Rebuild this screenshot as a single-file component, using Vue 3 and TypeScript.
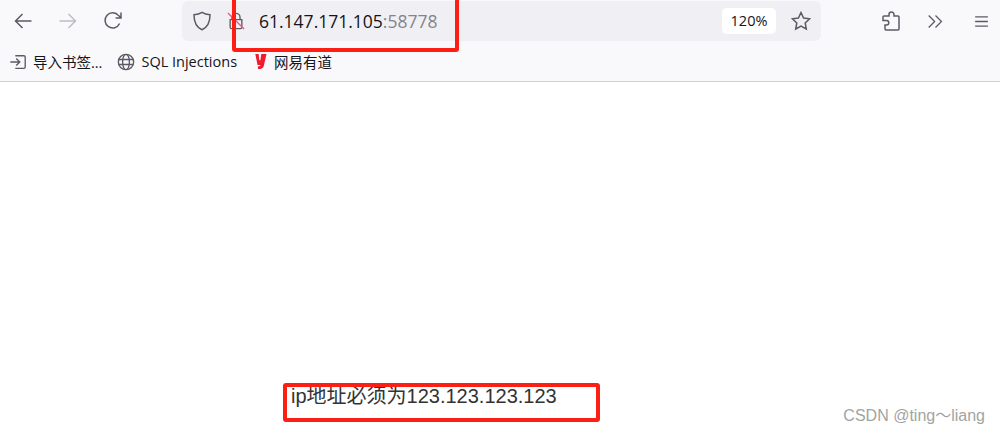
<script setup lang="ts">
const host = '61.147.171.105'
const port = ':58778'
const target = '123.123.123.123'
</script>

<template>
  <div class="browser">
    <header class="toolbar">
      <div class="nav">
        <svg class="icon back" viewBox="0 0 20 20"><path d="M18.5 10H2.5M9.5 3l-7 7 7 7" /></svg>
        <svg class="icon forward" viewBox="0 0 20 20"><path d="M1.5 10h16M10.5 3l7 7-7 7" /></svg>
        <svg class="icon reload" viewBox="0 0 20 20"><path d="M16.6 12.5A7.6 7.6 0 1 1 15.6 4.6L17.6 6.5M18 1.5v5.4h-5.4" /></svg>
      </div>
      <div class="urlbar">
        <svg class="icon shield" viewBox="0 0 20 20"><path d="M10 1.3c2.4 1.6 4.6 2.2 8 2.4 0 7-1.6 12.2-8 15-6.4-2.8-8-8-8-15 3.4-.2 5.6-.8 8-2.4z" /></svg>
        <svg class="icon lock" viewBox="0 0 20 20">
          <path d="M5.5 8.5V6a4.5 4.5 0 0 1 9 0v2.5M3.5 8.5h13v8.5a1.5 1.5 0 0 1-1.5 1.500H5A1.500 1.500 0 0 1 3.500 17z" />
          <path class="slash" d="M1 1l18 18" />
        </svg>
        <div class="address"><span class="host">{{ host }}</span><span class="port">{{ port }}</span></div>
        <div class="zoom">120%</div>
        <svg class="icon star" viewBox="0 0 20 20"><path d="M10 1.500l2.600 5.500 6 .8-4.400 4.200 1.100 6L10 15.100 4.700 18l1.100-6L1.400 7.800l6-.8z" /></svg>
      </div>
      <div class="actions">
        <svg class="icon puzzle" viewBox="0 0 20 20"><path d="M8 3.500a2.500 2.500 0 0 1 5 0V5h4a1 1 0 0 1 1 1v12a1 1 0 0 1-1 1H5a1 1 0 0 1-1-1v-4h1.500a2.300 2.300 0 0 0 0-4.600H2V6a1 1 0 0 1 1-1h5z" /></svg>
        <svg class="icon chevrons" viewBox="0 0 20 20"><path d="M2 3l7 7-7 7M10 3l7 7-7 7" /></svg>
        <svg class="icon menu" viewBox="0 0 20 20"><path d="M2.500 4.500h15M2.500 10h15M2.500 15.500h15" /></svg>
      </div>
    </header>

    <nav class="bookmarks">
      <div class="bookmark first">
        <svg class="bm-icon" viewBox="0 0 20 20"><path d="M7 3h9.500A1.500 1.500 0 0 1 18 4.500v11a1.500 1.500 0 0 1-1.500 1.500H7M1.500 10h10M8 6l4 4-4 4" /></svg>
        <span>导入书签...</span>
      </div>
      <div class="bookmark second">
        <svg class="bm-icon globe" viewBox="0 0 20 20"><circle cx="10" cy="10" r="8.500" /><ellipse cx="10" cy="10" rx="3.800" ry="8.500" /><path d="M1.500 7.200h17M1.500 12.800h17" /></svg>
        <span>SQL Injections</span>
      </div>
      <div class="bookmark third">
        <svg class="youdao" viewBox="0 0 16 20"><path d="M1.500 1.500h3.800l.8 7h1.200l1-7h6l-3 13c-.6 3-2.500 4.200-6.800 4.200v-3c1.700 0 2.600-.4 3-1.600H4z" /></svg>
        <span>网易有道</span>
      </div>
    </nav>

    <main class="page">
      <p class="message">ip地址必须为{{ target }}</p>
      <span class="watermark">CSDN @ting～liang</span>
    </main>

    <div class="mark mark-url"></div>
    <div class="mark mark-text"></div>
  </div>
</template>

<style>
html,
body {
  margin: 0;
  background: #fff;
}
</style>

<style scoped>
.browser {
  position: relative;
  width: 1000px;
  height: 435px;
  overflow: hidden;
  display: flex;
  flex-direction: column;
  font-family: "Liberation Sans", "Noto Sans CJK SC", sans-serif;
}

.toolbar {
  height: 42px;
  display: flex;
  align-items: center;
  background: #f9f9fb;
}

.icon {
  width: 20px;
  height: 20px;
  fill: none;
  stroke: #5b5b66;
  stroke-width: 1.500;
  flex: none;
}

.nav {
  width: 182px;
  padding-left: 13px;
  box-sizing: border-box;
  display: flex;
  gap: 25px;
}

.forward {
  stroke: #bdbdc3;
}

.urlbar {
  width: 639px;
  height: 40px;
  display: flex;
  align-items: center;
  padding: 0 10px;
  box-sizing: border-box;
  background: #f0f0f4;
  border-radius: 6px;
}

.lock {
  margin-left: 15px;
  width: 18px;
  height: 18px;
}

.slash {
  stroke: #ee5a7a;
}

.address {
  margin-left: 14px;
  flex: 1;
  font-size: 17.500px;
  font-family: "Open Sans", sans-serif;
}

.host {
  color: #15141a;
}

.port {
  color: #84848c;
}

.zoom {
  width: 54px;
  height: 26px;
  line-height: 26px;
  text-align: center;
  font-size: 14.500px;
  font-family: "Open Sans", sans-serif;
  color: #15141a;
  background: #fff;
  border-radius: 5px;
}

.star {
  margin-left: 15px;
}

.actions {
  flex: 1;
  display: flex;
  align-items: center;
  padding-left: 60px;
  gap: 26px;
}

.chevrons {
  width: 17px;
  height: 17px;
}

.menu {
  width: 17px;
  height: 17px;
  margin-left: 3px;
}

.bookmarks {
  height: 39px;
  display: flex;
  align-items: center;
  padding-left: 9px;
  background: #f9f9fb;
  border-bottom: 1px solid #cfcfd8;
  font-size: 14.500px;
  font-family: "Open Sans", "Noto Sans CJK SC", sans-serif;
  color: #15141a;
}

.bookmark {
  display: flex;
  align-items: center;
  gap: 6px;
}

.second {
  margin-left: 15px;
}

.third {
  margin-left: 17px;
}

.bm-icon {
  width: 18px;
  height: 18px;
  fill: none;
  stroke: #5b5b66;
  stroke-width: 1.500;
}

.youdao {
  width: 14px;
  height: 19px;
  fill: #ee1c2e;
}

.page {
  position: relative;
  flex: 1;
  background: #fff;
}

.message {
  margin: 0;
  padding: 302px 0 0 291px;
  font-size: 20px;
  line-height: 24px;
  color: #333;
}

.watermark {
  position: absolute;
  right: 15px;
  bottom: 9px;
  font-size: 16px;
  color: #a3a3a3;
}

.mark {
  position: absolute;
  border: 4px solid #fe1f14;
  border-radius: 3px;
  box-sizing: border-box;
}

.mark-url {
  left: 232px;
  top: -4px;
  width: 227px;
  height: 56px;
}

.mark-text {
  left: 283px;
  top: 383px;
  width: 317px;
  height: 39px;
}
</style>
